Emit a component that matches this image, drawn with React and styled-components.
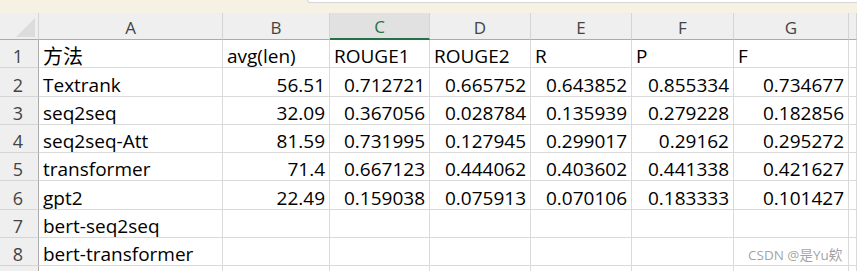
import styled, { createGlobalStyle } from 'styled-components';

const GlobalStyle = createGlobalStyle`
  body {
    margin: 0;
    background: #ffffff;
    overflow: hidden;
  }
`;

const Page = styled.div`
  position: relative;
  width: 857px;
  height: 271px;
  overflow: hidden;
  background: #ffffff;
  font-family: "Open Sans", "Noto Sans CJK SC", sans-serif;
`;

const TopStrip = styled.div`
  height: 13px;
  background: #f5f2e4;
  display: flex;
`;

const FormulaEdge = styled.div`
  margin-left: 307px;
  flex: 1;
  height: 2px;
  background: #ffffff;
  border-left: 1px solid #d6d6d6;
  border-bottom: 1px solid #d6d6d6;
  border-bottom-left-radius: 4px;
`;

const Sheet = styled.div`
  display: grid;
  grid-template-columns: 39px 184px 107px 100px 101px 101px 102px 115px 1fr;
  grid-template-rows: 27px repeat(9, 28.3px);
`;

const Corner = styled.div`
  background: #efefef;
  border-right: 1px solid #d5d5d5;
  border-bottom: 1px solid #ababab;
  display: flex;
  align-items: flex-end;
  justify-content: flex-end;
  padding: 0 3px 2px 0;
`;

const Triangle = styled.div`
  width: 0;
  height: 0;
  border-left: 19px solid transparent;
  border-bottom: 19px solid #dcdcdc;
`;

const ColHeader = styled.div`
  background: ${p => (p.$selected ? '#e1e1e1' : '#efefef')};
  color: ${p => (p.$selected ? '#217346' : '#444444')};
  border-right: 1px solid #d5d5d5;
  border-bottom: ${p => (p.$selected ? '2px solid #217346' : '1px solid #ababab')};
  font-size: 17px;
  display: flex;
  align-items: center;
  justify-content: center;
  padding-top: 2px;
`;

const RowHeader = styled.div`
  background: #efefef;
  color: #444444;
  border-right: 1px solid #ababab;
  border-bottom: 1px solid #d5d5d5;
  font-size: 18px;
  line-height: 22px;
  display: flex;
  align-items: flex-end;
  justify-content: center;
  padding-right: 2px;
`;

const Cell = styled.div`
  background: #ffffff;
  color: #000000;
  border-right: 1px solid #dadada;
  border-bottom: 1px solid #dadada;
  font-size: 19px;
  line-height: 22px;
  white-space: nowrap;
  display: flex;
  align-items: flex-end;
  justify-content: ${p => (p.$num ? 'flex-end' : 'flex-start')};
  padding: 0 ${p => (p.$num ? '4px' : '0')} 0 ${p => (p.$num ? '0' : '4px')};
`;

const Cjk = styled.span`
  font-family: "Noto Sans CJK SC", sans-serif;
  font-size: 20px;
`;

const Watermark = styled.div`
  position: absolute;
  left: 748px;
  top: 244px;
  font-size: 13.5px;
  color: rgba(120, 120, 120, 0.7);
  font-family: "Open Sans", "Noto Sans CJK SC", sans-serif;
  white-space: nowrap;
`;

const columns = ['A', 'B', 'C', 'D', 'E', 'F', 'G', ''];

const rows = [
  [<Cjk key="h">方法</Cjk>, 'avg(len)', 'ROUGE1', 'ROUGE2', 'R', 'P', 'F'],
  ['Textrank', 56.51, 0.712721, 0.665752, 0.643852, 0.855334, 0.734677],
  ['seq2seq', 32.09, 0.367056, 0.028784, 0.135939, 0.279228, 0.182856],
  ['seq2seq-Att', 81.59, 0.731995, 0.127945, 0.299017, 0.29162, 0.295272],
  ['transformer', 71.4, 0.667123, 0.444062, 0.403602, 0.441338, 0.421627],
  ['gpt2', 22.49, 0.159038, 0.075913, 0.070106, 0.183333, 0.101427],
  ['bert-seq2seq'],
  ['bert-transformer'],
  [],
];

export default function App() {
  return (
    <Page>
      <GlobalStyle />
      <TopStrip>
        <FormulaEdge />
      </TopStrip>
      <Sheet>
        <Corner>
          <Triangle />
        </Corner>
        {columns.map((c, i) => (
          <ColHeader key={`col${i}`} $selected={c === 'C'}>
            {c}
          </ColHeader>
        ))}
        {rows.map((row, r) => (
          <>
            <RowHeader key={`rh${r}`}>{r < 8 ? r + 1 : ''}</RowHeader>
            {columns.map((_, c) => {
              const v = row[c];
              return (
                <Cell key={`c${r}-${c}`} $num={typeof v === 'number'}>
                  {v === undefined ? '' : v}
                </Cell>
              );
            })}
          </>
        ))}
      </Sheet>
      <Watermark>CSDN @是Yu欸</Watermark>
    </Page>
  );
}
